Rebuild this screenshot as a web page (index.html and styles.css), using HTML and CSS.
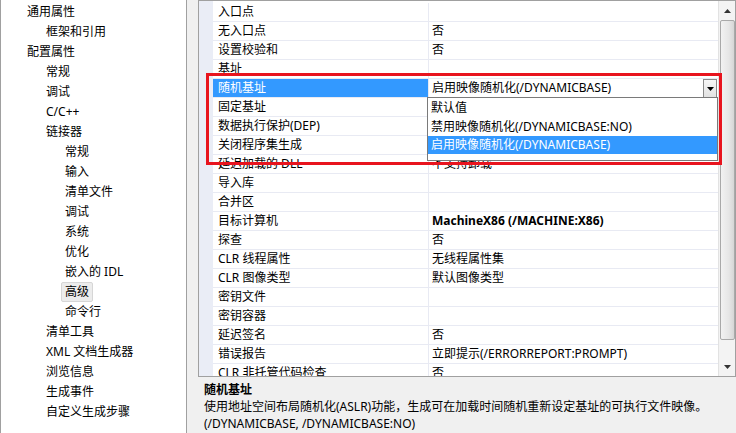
FILE: index.html
```html
<!DOCTYPE html>
<html lang="zh-CN">
<head>
<meta charset="utf-8">
<title>属性页</title>
<link rel="stylesheet" href="styles.css">
</head>
<body>
<div class="app">
  <div class="tree">
    <div class="ti l0">通用属性</div>
    <div class="ti l1">框架和引用</div>
    <div class="ti l0">配置属性</div>
    <div class="ti l1">常规</div>
    <div class="ti l1">调试</div>
    <div class="ti l1">C/C++</div>
    <div class="ti l1">链接器</div>
    <div class="ti l2">常规</div>
    <div class="ti l2">输入</div>
    <div class="ti l2">清单文件</div>
    <div class="ti l2">调试</div>
    <div class="ti l2">系统</div>
    <div class="ti l2">优化</div>
    <div class="ti l2">嵌入的 IDL</div>
    <div class="ti l2"><span class="sel">高级</span></div>
    <div class="ti l2">命令行</div>
    <div class="ti l1">清单工具</div>
    <div class="ti l1">XML 文档生成器</div>
    <div class="ti l1">浏览信息</div>
    <div class="ti l1">生成事件</div>
    <div class="ti l1">自定义生成步骤</div>
  </div>
  <div class="right">
    <div class="grid">
      <div class="margin"></div>
      <div class="rows">
        <div class="row"><div class="name">入口点</div><div class="val"></div></div>
        <div class="row"><div class="name">无入口点</div><div class="val">否</div></div>
        <div class="row"><div class="name">设置校验和</div><div class="val">否</div></div>
        <div class="row"><div class="name">基址</div><div class="val"></div></div>
        <div class="row active"><div class="name">随机基址</div><div class="val">启用映像随机化(/DYNAMICBASE)
            <div class="ddbtn"><svg width="7" height="4" viewBox="0 0 7 4"><path d="M0 0H7L3.5 4Z" fill="#000"/></svg></div>
            <div class="ddlist">
              <div class="opt">默认值</div>
              <div class="opt">禁用映像随机化(/DYNAMICBASE:NO)</div>
              <div class="opt hl">启用映像随机化(/DYNAMICBASE)</div>
            </div>
          </div></div>
        <div class="row"><div class="name">固定基址</div><div class="val"></div></div>
        <div class="row"><div class="name">数据执行保护(DEP)</div><div class="val"></div></div>
        <div class="row"><div class="name">关闭程序集生成</div><div class="val"></div></div>
        <div class="row"><div class="name">延迟加载的 DLL</div><div class="val">不支持卸载</div></div>
        <div class="row"><div class="name">导入库</div><div class="val"></div></div>
        <div class="row"><div class="name">合并区</div><div class="val"></div></div>
        <div class="row"><div class="name">目标计算机</div><div class="val b">MachineX86 (/MACHINE:X86)</div></div>
        <div class="row"><div class="name">探查</div><div class="val">否</div></div>
        <div class="row"><div class="name">CLR 线程属性</div><div class="val">无线程属性集</div></div>
        <div class="row"><div class="name">CLR 图像类型</div><div class="val">默认图像类型</div></div>
        <div class="row"><div class="name">密钥文件</div><div class="val"></div></div>
        <div class="row"><div class="name">密钥容器</div><div class="val"></div></div>
        <div class="row"><div class="name">延迟签名</div><div class="val">否</div></div>
        <div class="row"><div class="name">错误报告</div><div class="val">立即提示(/ERRORREPORT:PROMPT)</div></div>
        <div class="row"><div class="name">CLR 非托管代码检查</div><div class="val">否</div></div>
      </div>
      <div class="sbar">
        <div class="sarrow"><svg width="7" height="4" viewBox="0 0 7 4"><path d="M3.5 0L7 4H0Z" fill="#333"/></svg></div>
        <div class="thumb"></div>
        <div class="sfill"></div>
        <div class="sarrow"><svg width="7" height="4" viewBox="0 0 7 4"><path d="M0 0H7L3.5 4Z" fill="#333"/></svg></div>
      </div>
      <div class="redbox"></div>
    </div>
    <div class="desc">
      <div class="dtitle">随机基址</div>
      <div>使用地址空间布局随机化(ASLR)功能，生成可在加载时间随机重新设定基址的可执行文件映像。</div>
      <div>(/DYNAMICBASE, /DYNAMICBASE:NO)</div>
    </div>
  </div>
</div>
</body>
</html>
```
FILE: styles.css
```css
* { box-sizing: border-box; }
html, body { margin: 0; padding: 0; }
body {
  width: 736px;
  height: 433px;
  overflow: hidden;
  background: #f0f0f0;
  font-family: "Noto Sans", "Noto Sans CJK SC", sans-serif;
  font-size: 12px;
  color: #000;
}
.app {
  display: flex;
  height: 433px;
  gap: 11px;
}
.tree {
  width: 187px;
  height: 433px;
  background: #fff;
  border-left: 1px solid #a0a0a0;
  border-right: 1px solid #a0a0a0;
  padding-top: 2px;
}
.ti {
  height: 20px;
  line-height: 20px;
  white-space: nowrap;
}
.l0 { padding-left: 26px; }
.l1 { padding-left: 45px; }
.l2 { padding-left: 64px; }
.sel {
  display: inline-block;
  margin-left: -4px;
  padding: 0 3px;
  height: 20px;
  line-height: 18px;
  background: #ececec;
  border: 1px solid #d6d6d6;
  border-radius: 2px;
}
.right {
  flex: 1;
  display: flex;
  flex-direction: column;
}
.grid {
  position: relative;
  height: 377px;
  border: 1px solid #a0a0a0;
  background: #fff;
  display: flex;
}
.margin {
  width: 14px;
  background: #eaedf6;
}
.rows {
  flex: 1;
  padding-top: 2px;
  overflow: hidden;
}
.row {
  display: flex;
  height: 19px;
  border-bottom: 1px solid #e8eaf3;
  line-height: 18px;
  white-space: nowrap;
}
.name {
  width: 216px;
  padding-left: 5px;
  border-right: 1px solid #e8eaf3;
}
.val {
  flex: 1;
  position: relative;
  padding-left: 3px;
}
.b { font-weight: bold; }
.active .name {
  background: #3399ff;
  color: #fff;
}
.ddbtn {
  position: absolute;
  right: 1px;
  top: 0;
  width: 14px;
  height: 19px;
  border: 1px solid #8a8a8a;
  background: linear-gradient(#f6f6f6, #e2e2e2);
  display: flex;
  align-items: center;
  justify-content: center;
}
.ddlist {
  position: absolute;
  left: -2px;
  top: 18px;
  width: 291px;
  height: 64px;
  background: #fff;
  border: 1px solid #7a7a7a;
  z-index: 2;
}
.opt {
  height: 19px;
  line-height: 19px;
  padding-left: 3px;
}
.opt.hl {
  background: #3399ff;
  color: #fff;
  height: 18px;
  line-height: 18px;
}
.sbar {
  width: 17px;
  border-left: 1px solid #e2e2e2;
  background: #f3f3f3;
  display: flex;
  flex-direction: column;
  align-items: center;
}
.sarrow {
  height: 19px;
  width: 100%;
  display: flex;
  align-items: center;
  justify-content: center;
}
.thumb {
  width: 15px;
  height: 320px;
  border: 1px solid #a9a9a9;
  border-radius: 2px;
  background: linear-gradient(90deg, #f2f2f2, #e6e6e6 60%, #d6d6d6);
}
.sfill { flex: 1; }
.redbox {
  position: absolute;
  left: 7px;
  top: 72px;
  width: 516px;
  height: 92px;
  border: 3px solid #e8141e;
  z-index: 3;
  pointer-events: none;
}
.desc {
  flex: 1;
  padding: 4px 0 0 6px;
  line-height: 17px;
  white-space: nowrap;
}
.dtitle { font-weight: bold; }
```
